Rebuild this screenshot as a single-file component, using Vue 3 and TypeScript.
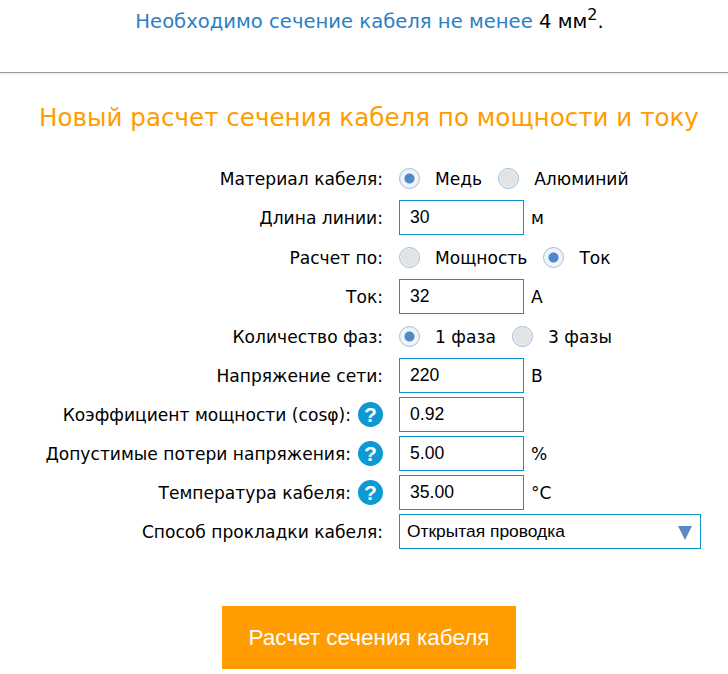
<script setup lang="ts">
interface Opt { label: string; on: boolean }
interface Row {
  label: string
  help?: boolean
  radios?: Opt[]
  value?: string
  unit?: string
  select?: string
}
const rows: Row[] = [
  { label: 'Материал кабеля:', radios: [{ label: 'Медь', on: true }, { label: 'Алюминий', on: false }] },
  { label: 'Длина линии:', value: '30', unit: 'м' },
  { label: 'Расчет по:', radios: [{ label: 'Мощность', on: false }, { label: 'Ток', on: true }] },
  { label: 'Ток:', value: '32', unit: 'А' },
  { label: 'Количество фаз:', radios: [{ label: '1 фаза', on: true }, { label: '3 фазы', on: false }] },
  { label: 'Напряжение сети:', value: '220', unit: 'В' },
  { label: 'Коэффициент мощности (cosφ):', help: true, value: '0.92' },
  { label: 'Допустимые потери напряжения:', help: true, value: '5.00', unit: '%' },
  { label: 'Температура кабеля:', help: true, value: '35.00', unit: '°C' },
  { label: 'Способ прокладки кабеля:', select: 'Открытая проводка' }
]
</script>

<template>
  <div class="page">
    <p class="result">Необходимо сечение кабеля не менее <span class="val">4 мм<sup>2</sup>.</span></p>
    <div class="rule"></div>
    <h2 class="title">Новый расчет сечения кабеля по мощности и току</h2>
    <form class="form" @submit.prevent>
      <div v-for="r in rows" :key="r.label" class="row" :class="{ 'row-radio': r.radios }">
        <div class="label">
          <span>{{ r.label }}</span>
          <span v-if="r.help" class="help">?</span>
        </div>
        <div class="ctl">
          <template v-if="r.radios">
            <span v-for="o in r.radios" :key="o.label" class="radio-item">
              <span class="radio" :class="{ on: o.on }"></span>
              <span class="radio-text">{{ o.label }}</span>
            </span>
          </template>
          <template v-else-if="r.select">
            <div class="select">
              <span>{{ r.select }}</span>
              <svg class="arrow" width="16" height="16" viewBox="0 0 16 16"><path d="M1 2h14L8 16z" fill="#5a8ac6" /></svg>
            </div>
          </template>
          <template v-else>
            <div class="input">{{ r.value }}</div>
            <span v-if="r.unit" class="unit">{{ r.unit }}</span>
          </template>
        </div>
      </div>
      <div class="actions">
        <button class="submit" type="submit">Расчет сечения кабеля</button>
      </div>
    </form>
  </div>
</template>

<style>
html, body { margin: 0; background: #fff; }
</style>

<style scoped>
.page {
  width: 728px;
  height: 674px;
  overflow: hidden;
  font-family: "DejaVu Sans", Verdana, sans-serif;
  color: #000;
  background: #fff;
}
.result {
  margin: 0;
  height: 72px;
  box-sizing: border-box;
  padding-top: 10px;
  padding-left: 11px;
  text-align: center;
  font-size: 19.6px;
  line-height: 24px;
  color: #2b80c4;
  white-space: nowrap;
}
.val { color: #000; }
sup { font-size: 16px; line-height: 0; vertical-align: 8px; }
.rule {
  height: 1px;
  background: #999;
  border-bottom: 2px solid #f3f3f3;
}
.title {
  margin: 24px 0 0;
  padding-left: 10px;
  text-align: center;
  font-weight: 400;
  font-size: 24.6px;
  line-height: 38px;
  color: #ff9c00;
  white-space: nowrap;
}
.form {
  margin-top: 23px;
  display: flex;
  flex-direction: column;
  gap: 4px;
}
.row {
  display: grid;
  grid-template-columns: 383px 1fr;
  column-gap: 16px;
  height: 35px;
  align-items: center;
  font-size: 17.1px;
}
.row-radio {
  height: 36px;
  padding-top: 1px;
  box-sizing: border-box;
}
.label {
  display: flex;
  justify-content: flex-end;
  align-items: center;
  gap: 7px;
  white-space: nowrap;
}
.help {
  width: 25px;
  height: 25px;
  border-radius: 50%;
  background: #0d99d3;
  color: #fff;
  font-family: "Liberation Sans", Arial, sans-serif;
  font-weight: 700;
  font-size: 21px;
  line-height: 25px;
  text-align: center;
}
.ctl {
  display: flex;
  align-items: center;
}
.radio-item {
  display: inline-flex;
  align-items: center;
  margin-right: 16px;
}
.radio {
  width: 21px;
  height: 21px;
  box-sizing: border-box;
  border-radius: 50%;
  background: #e3e3e3;
  border: 1px solid #9dbfdd;
  box-shadow: inset 0 0 0 1px #eef2f6;
}
.radio.on {
  background: radial-gradient(circle, #4d89cb 0 4.5px, #f1f4f8 5.5px);
}
.radio-text { margin-left: 15px; }
.input {
  width: 125px;
  height: 35px;
  box-sizing: border-box;
  border: 1px solid #0d94c9;
  padding-left: 10px;
  line-height: 33px;
  font-family: "Liberation Sans", Arial, sans-serif;
  font-size: 17.6px;
}
.unit { margin-left: 7px; }
.select {
  width: 302px;
  height: 35px;
  box-sizing: border-box;
  border: 1px solid #0d94c9;
  padding: 0 7px 0 7px;
  display: flex;
  align-items: center;
  justify-content: space-between;
  font-family: "Liberation Sans", Arial, sans-serif;
  font-size: 17.4px;
}
.actions {
  margin-top: 53px;
  display: flex;
  justify-content: center;
  padding-left: 10px;
}
.submit {
  width: 294px;
  height: 63px;
  border: 0;
  padding: 0;
  background: #ff9c00;
  color: #fff;
  font-family: "Liberation Sans", Arial, sans-serif;
  font-size: 22.5px;
}
</style>
